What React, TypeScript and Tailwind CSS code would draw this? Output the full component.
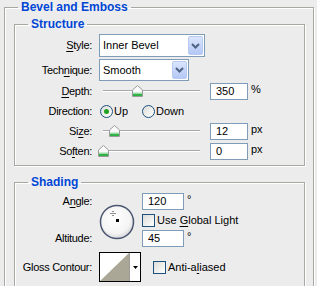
import React from 'react';

const font = { fontFamily: '"Liberation Sans", Arial, sans-serif' };

const U: React.FC<{ children: React.ReactNode }> = ({ children }) => <span className="underline underline-offset-2">{children}</span>;

const Chevron = () => (
  <svg width="9" height="6" viewBox="0 0 9 6">
    <path d="M1 1 L4.5 4.5 L8 1" fill="none" stroke="#4d6185" strokeWidth="2" />
  </svg>
);

const Select: React.FC<{ value: string; width: string; height: string }> = ({ value, width, height }) => (
  <div className={`flex ${width} ${height} items-stretch border border-[#7f9db9] bg-white`}>
    <div className="flex flex-1 items-center pl-[3px] text-[11px] text-black">{value}</div>
    <div className="m-px flex w-[15px] items-center justify-center rounded-[2px] border border-[#b9cbf3] bg-gradient-to-b from-[#dbe5fc] to-[#b3c8f5]">
      <Chevron />
    </div>
  </div>
);

const Field: React.FC<{ value: string; unit: string; width?: string }> = ({ value, unit, width = 'w-[38px]' }) => (
  <div className="flex items-start">
    <div className={`${width} h-[17px] border border-[#7f9db9] bg-white pl-[5px] text-[11px] leading-[15px]`}>{value}</div>
    <span className="ml-[3px] text-[11px] leading-[13px]">{unit}</span>
  </div>
);

const Thumb = () => (
  <svg width="11" height="12" viewBox="0 0 11 12">
    <path d="M5.5 0.5 L10.5 5 L10.5 11.5 L0.5 11.5 L0.5 5 Z" fill="#fafafa" stroke="#9a9a9a" />
    <path d="M1 8.5 H10 V11 H1 Z" fill="#2fb344" />
    <path d="M1 8 H10" stroke="#a6dcae" />
  </svg>
);

const Slider: React.FC<{ pos: number }> = ({ pos }) => (
  <div className="relative h-[17px] w-[106px]">
    <div className="absolute left-[4px] right-[5px] top-[7px] h-[2px] border-t border-[#a7a6aa] border-b border-b-white" />
    <div className="absolute top-[2px]" style={{ left: 4 + pos - 5 }}>
      <Thumb />
    </div>
  </div>
);

const Radio: React.FC<{ checked?: boolean }> = ({ checked }) => (
  <span className="flex h-[13px] w-[13px] items-center justify-center rounded-full border border-[#1c5180] bg-gradient-to-br from-[#dcdcd7] to-white">
    {checked && <span className="h-[5px] w-[5px] rounded-full bg-[#21a121]" />}
  </span>
);

const Check = () => (
  <span className="inline-block h-[13px] w-[13px] border border-[#1c5180] bg-gradient-to-br from-[#dcdcd7] to-white" />
);

const Label: React.FC<{ children: React.ReactNode }> = ({ children }) => (
  <div className="w-[78px] shrink-0 pr-px text-right text-[11px] tracking-[-0.3px]">{children}</div>
);

const box = 'border border-[#a8a8a2] shadow-[1px_1px_0_#fff,inset_1px_1px_0_#fff]';
const legend = 'px-[3px] text-[12px] font-bold leading-[14px] text-[#0046d5]';

export default function App() {
  return (
    <div className="h-[286px] w-[317px] overflow-hidden bg-[#ececec] text-black" style={font}>
      <fieldset className={`ml-[4px] h-[320px] w-[310px] ${box}`}>
        <legend className={`ml-[13px] ${legend}`}>Bevel and Emboss</legend>

        <fieldset className={`ml-[9px] mt-[3px] h-[149px] w-[291px] ${box}`}>
          <legend className={`ml-[13px] ${legend}`}>Structure</legend>
          <div className="mt-[3px] flex flex-col">
            <div className="flex h-[23px] items-center">
              <Label><U>S</U>tyle:</Label>
              <div className="ml-[6px]"><Select value="Inner Bevel" width="w-[106px]" height="h-[23px]" /></div>
            </div>
            <div className="mt-[2px] flex h-[22px] items-center">
              <Label>Tech<U>n</U>ique:</Label>
              <div className="ml-[6px]"><Select value="Smooth" width="w-[90px]" height="h-[22px]" /></div>
            </div>
            <div className="mt-[2px] flex h-[17px] items-center">
              <Label><U>D</U>epth:</Label>
              <div className="ml-[6px]"><Slider pos={34} /></div>
              <div className="ml-[5px]"><Field value="350" unit="%" /></div>
            </div>
            <div className="mt-[2px] flex h-[18px] items-center text-[11px]">
              <Label>Direction:</Label>
              <div className="ml-[7px] flex items-center">
                <Radio checked />
                <span className="ml-[1px]">Up</span>
              </div>
              <div className="ml-[14px] flex items-center">
                <Radio />
                <span className="ml-[1px]">Down</span>
              </div>
            </div>
            <div className="mt-[3px] flex h-[17px] items-center">
              <Label>Si<U>z</U>e:</Label>
              <div className="ml-[6px]"><Slider pos={11} /></div>
              <div className="ml-[5px]"><Field value="12" unit="px" /></div>
            </div>
            <div className="mt-[3px] flex h-[17px] items-center">
              <Label>So<U>f</U>ten:</Label>
              <div className="ml-[6px]"><Slider pos={0} /></div>
              <div className="ml-[5px]"><Field value="0" unit="px" /></div>
            </div>
          </div>
        </fieldset>

        <fieldset className={`ml-[9px] mt-[9px] h-[140px] w-[291px] ${box}`}>
          <legend className={`ml-[13px] ${legend}`}>Shading</legend>
          <div className="mt-[4px] flex">
            <div className="flex flex-col text-[11px]">
              <div className="flex h-[17px] items-center"><Label>A<U>n</U>gle:</Label></div>
              <div className="mt-[20px] flex h-[17px] items-center"><Label>Altitude:</Label></div>
            </div>
            <div className="ml-[6px] mt-[11px]">
              <svg width="36" height="36" viewBox="0 0 36 36">
                <defs>
                  <radialGradient id="dial" cx="0.45" cy="0.4" r="0.6">
                    <stop offset="0" stopColor="#ffffff" />
                    <stop offset="0.75" stopColor="#f4f4f4" />
                    <stop offset="1" stopColor="#d8d8dc" />
                  </radialGradient>
                </defs>
                <circle cx="18" cy="18" r="16.5" fill="url(#dial)" stroke="#4b5670" strokeWidth="1.5" />
                <g fill="#222">
                  <rect x="13.5" y="7" width="1" height="1" />
                  <rect x="13.5" y="11" width="1" height="1" />
                  <rect x="11.5" y="9" width="1" height="1" />
                  <rect x="15.5" y="9" width="1" height="1" />
                  <rect x="13.5" y="9" width="1" height="1" />
                  <rect x="17" y="15" width="3" height="3" fill="#000" />
                </g>
              </svg>
            </div>
            <div className="ml-[7px] flex flex-col text-[11px]">
              <Field value="120" unit="°" width="w-[42px]" />
              <div className="mt-[4px] flex h-[13px] items-center">
                <Check />
                <span className="ml-[2px]">Use <U>G</U>lobal Light</span>
              </div>
              <div className="mt-[3px]"><Field value="45" unit="°" width="w-[42px]" /></div>
            </div>
          </div>
          <div className="mt-[5px] flex items-center text-[11px]">
            <Label>Gloss Contour:</Label>
            <div className="ml-[6px] flex h-[30px] w-[42px] border border-black bg-white">
              <svg width="29" height="28" viewBox="0 0 29 28" className="shrink-0">
                <path d="M0 28 L29 0 L29 28 Z" fill="#aba797" />
              </svg>
              <div className="flex flex-1 items-center justify-center border-l border-[#9a9a9a]">
                <svg width="5" height="3" viewBox="0 0 5 3"><path d="M0 0 H5 L2.5 3 Z" fill="#000" /></svg>
              </div>
            </div>
            <div className="ml-[12px] flex items-center">
              <Check />
              <span className="ml-[2px]">Anti-a<U>l</U>iased</span>
            </div>
          </div>
        </fieldset>
      </fieldset>
    </div>
  );
}
